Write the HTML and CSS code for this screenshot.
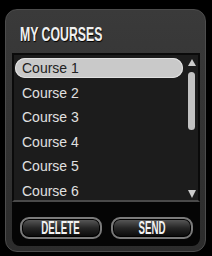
FILE: index.html
```html
<!DOCTYPE html>
<html lang="en">
<head>
    <meta charset="UTF-8">
    <title>My Courses</title>
    <link rel="stylesheet" href="styles.css">
</head>
<body>
    <div class="panel">
        <div class="title"><span>MY COURSES</span></div>
        <div class="inner">
            <div class="list">
                <div class="items">
                    <div class="item selected">Course 1</div>
                    <div class="item">Course 2</div>
                    <div class="item">Course 3</div>
                    <div class="item">Course 4</div>
                    <div class="item">Course 5</div>
                    <div class="item">Course 6</div>
                </div>
                <div class="scroll">
                    <span class="arrow up"></span>
                    <span class="thumb"></span>
                    <span class="arrow down"></span>
                </div>
            </div>
            <div class="actions">
                <button class="btn"><span>DELETE</span></button>
                <button class="btn"><span>SEND</span></button>
            </div>
        </div>
    </div>
</body>
</html>
```

FILE: styles.css
```css
body {
    margin: 0;
    width: 212px;
    height: 256px;
    background-color: #000;
    font-family: "Liberation Sans", Arial, sans-serif;
    overflow: hidden;
}

.panel {
    margin: 9px 6px 0 5px;
    height: 243px;
    box-sizing: border-box;
    display: flex;
    flex-direction: column;
    padding: 0 5px 5px 6px;
    border: 1px solid #4c4c4c;
    border-radius: 12px;
    background: linear-gradient(#3a3a3a, #2c2c2c);
}

.title {
    height: 43px;
    box-sizing: border-box;
    padding: 13px 0 0 8px;
    font-weight: bold;
    font-size: 21px;
    line-height: 21px;
    color: #f0f0f0;
    text-shadow: 1px 1px 1px #000;
    white-space: nowrap;
}

/* narrow the letters to match the condensed face */
.title span {
    display: inline-block;
    transform: scaleX(0.585);
    transform-origin: left center;
}

.inner {
    flex: 1;
    display: flex;
    flex-direction: column;
    background-color: #050505;
    border-radius: 0 0 8px 8px;
}

.list {
    height: 149px;
    box-sizing: border-box;
    display: flex;
    background-color: #1c1c1c;
    border: 2px solid #0a0a0a;
    border-bottom-color: #4a4a4a;
}

.items {
    width: 168px;
    margin: 3px 0 0 1px;
    display: flex;
    flex-direction: column;
    gap: 4.5px;
}

.item {
    height: 20px;
    line-height: 20px;
    padding-left: 7px;
    font-size: 14px;
    color: #e0e0e0;
    border-radius: 10px;
}

.item.selected {
    background-color: #c9c9c9;
    color: #222;
    box-shadow: inset 0 0 0 1px #e0e0e0;
}

.scroll {
    width: 9px;
    margin-left: 4px;
    padding: 4px 0 2px;
    display: flex;
    flex-direction: column;
    align-items: center;
}

.arrow {
    width: 0;
    height: 0;
    border-left: 4.5px solid transparent;
    border-right: 4.5px solid transparent;
}

.arrow.up {
    border-bottom: 7px solid #ccc;
}

.arrow.down {
    margin-top: auto;
    border-top: 8px solid #ccc;
}

.thumb {
    width: 7px;
    height: 58px;
    margin-top: 6px;
    border-radius: 4px;
    background-color: #c2c2c2;
}

.actions {
    display: flex;
    gap: 9px;
    padding: 15px 7px 0 8px;
}

.btn {
    flex: 1;
    height: 22px;
    padding: 0;
    border: 2px solid #7a7a7a;
    border-radius: 9px;
    background: linear-gradient(#5c5c5c, #262626 50%, #080808);
    box-shadow: inset 0 0 0 1px #000;
    color: #f2f2f2;
    font-family: "Liberation Sans", Arial, sans-serif;
    font-weight: bold;
    font-size: 18px;
    line-height: 18px;
    white-space: nowrap;
}

.btn span {
    display: inline-block;
    transform: scaleX(0.54);
}
```
